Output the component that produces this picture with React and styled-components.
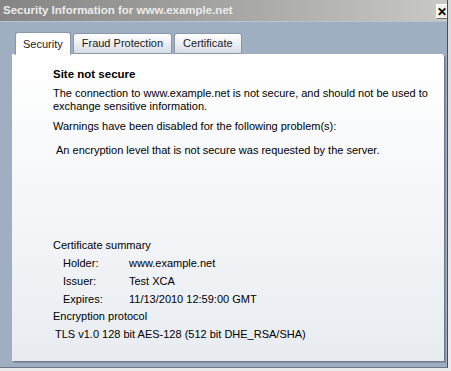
import React from "react";
import styled, { createGlobalStyle } from "styled-components";

const Global = createGlobalStyle`
  html, body { margin: 0; padding: 0; background: #d9d9d9; }
  body { font-family: "Liberation Sans", Arial, sans-serif; }
`;

const Page = styled.div`
  width: 451px;
  height: 371px;
  overflow: hidden;
  background: linear-gradient(to bottom, #d9d9d9, #ececec);
`;

const Window = styled.div`
  width: 447px;
  height: 367px;
  background: #a0aec1;
  border-right: 1px solid #4a4f57;
  border-bottom: 1px solid #6b7586;
  display: flex;
  flex-direction: column;
`;

const TitleBar = styled.div`
  height: 21px;
  flex: none;
  display: flex;
  align-items: flex-start;
  justify-content: space-between;
  background: linear-gradient(to right, #858585 0%, #a8a8a6 55%, #c8c8c4 100%);
  border-bottom: 1px solid #b9c2cf;
`;

const Title = styled.div`
  font-weight: bold;
  font-size: 11.5px;
  line-height: 21px;
  color: #ebebeb;
  padding-left: 3px;
  white-space: nowrap;
`;

const CloseBox = styled.div`
  box-sizing: border-box;
  width: 11px;
  height: 15px;
  margin-top: 4px;
  background: #f0f0ec;
  border-left: 1px solid #ffffff;
  border-top: 1px solid #ffffff;
  border-bottom: 1px solid #6d6d6d;
  display: flex;
  align-items: center;
  justify-content: center;
  font-weight: bold;
  font-size: 12px;
  color: #000;
  overflow: hidden;
`;

const Body = styled.div`
  flex: 1;
  padding: 10px 2px 5px 12px;
  display: flex;
  flex-direction: column;
`;

const TabRow = styled.div`
  display: flex;
  align-items: flex-end;
  gap: 2px;
  padding-left: 3px;
  height: 22px;
  flex: none;
  position: relative;
  z-index: 1;
`;

const Tab = styled.div`
  box-sizing: border-box;
  height: ${(p) => (p.$active ? "23px" : "21px")};
  margin-bottom: ${(p) => (p.$active ? "-1px" : "0")};
  padding: 0 ${(p) => (p.$pad || 8)}px;
  font-size: 11px;
  line-height: ${(p) => (p.$active ? "22px" : "19px")};
  color: #1a1a1a;
  border: 1px solid #8a97ab;
  border-bottom: ${(p) => (p.$active ? "none" : "1px solid #8a97ab")};
  border-radius: 3px 3px 0 0;
  background: ${(p) =>
    p.$active
      ? "#ffffff"
      : "linear-gradient(to bottom, #ffffff 0%, #f0f2f5 40%, #d6dce5 100%)"};
  white-space: nowrap;
`;

const Panel = styled.div`
  box-sizing: border-box;
  width: 432px;
  height: 307px;
  background: linear-gradient(to bottom, #ffffff 0%, #f7f8fa 40%, #e8ecf1 100%);
  border-radius: 0 3px 0 0;
  box-shadow: 1px 1px 0 #6f7a8a, 2px 2px 0 #8793a5;
  padding: 14px 0 0 41px;
  font-size: 11px;
  color: #000;
`;

const Heading = styled.div`
  font-weight: bold;
  font-size: 11.5px;
  line-height: 13px;
`;

const Para = styled.div`
  line-height: 13px;
  margin-top: ${(p) => p.$mt || 0}px;
  padding-left: ${(p) => p.$indent || 0}px;
  width: 380px;
`;

const Summary = styled.div`
  margin-top: 80px;
  display: grid;
  grid-template-columns: 76px 1fr;
  grid-auto-rows: 17.75px;
  align-items: center;
  line-height: 13px;
`;

const SectionLabel = styled.div`
  grid-column: 1 / -1;
`;

const Key = styled.div`
  padding-left: 10px;
`;

const Value = styled.div``;

const Full = styled.div`
  grid-column: 1 / -1;
  padding-left: ${(p) => p.$indent || 0}px;
`;

export default function App() {
  return (
    <Page>
      <Global />
      <Window>
        <TitleBar>
          <Title>Security Information for www.example.net</Title>
          <CloseBox>✕</CloseBox>
        </TitleBar>
        <Body>
          <TabRow>
            <Tab $active $pad={7}>Security</Tab>
            <Tab $pad={8}>Fraud Protection</Tab>
            <Tab $pad={8}>Certificate</Tab>
          </TabRow>
          <Panel>
            <Heading>Site not secure</Heading>
            <Para $mt={6}>
              The connection to www.example.net is not secure, and should not be used to exchange sensitive information.
            </Para>
            <Para $mt={7}>Warnings have been disabled for the following problem(s):</Para>
            <Para $mt={11} $indent={3}>
              An encryption level that is not secure was requested by the server.
            </Para>
            <Summary>
              <SectionLabel>Certificate summary</SectionLabel>
              <Key>Holder:</Key>
              <Value>www.example.net</Value>
              <Key>Issuer:</Key>
              <Value>Test XCA</Value>
              <Key>Expires:</Key>
              <Value>11/13/2010 12:59:00 GMT</Value>
              <SectionLabel>Encryption protocol</SectionLabel>
              <Full $indent={2}>TLS v1.0 128 bit AES-128 (512 bit DHE_RSA/SHA)</Full>
            </Summary>
          </Panel>
        </Body>
      </Window>
    </Page>
  );
}
